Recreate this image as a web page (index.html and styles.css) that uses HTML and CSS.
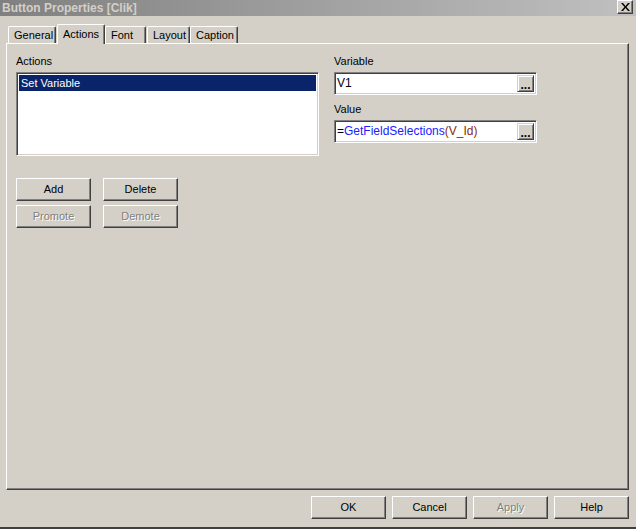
FILE: index.html
```html
<!DOCTYPE html>
<html>
<head>
<meta charset="utf-8">
<link rel="stylesheet" href="styles.css">
</head>
<body>
<div class="window">
  <div class="titlebar">
    <span class="title">Button Properties [Clik]</span>
    <span class="close"><svg width="9" height="8" viewBox="0 0 9 8"><path d="M0 0h2l2.5 3 2.5-3h2L5.5 4 9 8H7L4.5 5 2 8H0l3.5-4z" fill="#000"/></svg></span>
  </div>
  <div class="tabs">
    <div class="tab t-general">General</div>
    <div class="tab active t-actions">Actions</div>
    <div class="tab t-font">Font</div>
    <div class="tab t-layout">Layout</div>
    <div class="tab t-caption">Caption</div>
  </div>
  <div class="panel">
    <div class="cols">
      <div class="left">
        <div class="label">Actions</div>
        <div class="listbox">
          <div class="item selected">Set Variable</div>
        </div>
        <div class="btnrow first">
          <div class="btn">Add</div>
          <div class="btn">Delete</div>
        </div>
        <div class="btnrow">
          <div class="btn disabled">Promote</div>
          <div class="btn disabled">Demote</div>
        </div>
      </div>
      <div class="right">
        <div class="label">Variable</div>
        <div class="field"><span class="val">V1</span><span class="dots">...</span></div>
        <div class="label second">Value</div>
        <div class="field"><span class="val"><span class="op">=</span><span class="fn">GetFieldSelections</span><span class="arg">(V_Id)</span></span><span class="dots">...</span></div>
      </div>
    </div>
  </div>
  <div class="footer">
    <div class="btn">OK</div>
    <div class="btn">Cancel</div>
    <div class="btn disabled">Apply</div>
    <div class="btn">Help</div>
  </div>
  <div class="bottomline"></div>
</div>
</body>
</html>
```
FILE: styles.css
```css
html, body {
  margin: 0;
  padding: 0;
  background: #d4d0c8;
}
.window {
  width: 636px;
  height: 529px;
  display: flex;
  flex-direction: column;
  font-family: "Liberation Sans", Arial, sans-serif;
  font-size: 11px;
  color: #000;
  background: #d4d0c8;
  overflow: hidden;
}
.titlebar {
  height: 16px;
  flex: none;
  background: linear-gradient(to right, #808080, #c0c0c0);
  display: flex;
  align-items: center;
  justify-content: space-between;
  padding: 0 3px 0 2px;
}
.title {
  font-weight: bold;
  font-size: 12px;
  color: #d4d0c8;
  line-height: 14px;
}
.close {
  width: 14px;
  height: 12px;
  background: #d4d0c8;
  border-top: 1px solid #fff;
  border-left: 1px solid #fff;
  border-right: 1px solid #404040;
  border-bottom: 1px solid #404040;
  box-shadow: inset -1px -1px #808080;
  display: flex;
  align-items: center;
  justify-content: center;
  margin-top: -2px;
}
.tabs {
  display: flex;
  align-items: flex-end;
  height: 28px;
  flex: none;
  padding-left: 8px;
  position: relative;
  z-index: 1;
}
.tab {
  box-sizing: border-box;
  height: 17px;
  line-height: 16px;
  padding-left: 5px;
  border-top: 1px solid #fff;
  border-left: 1px solid #fff;
  border-right: 1px solid #404040;
  box-shadow: inset -1px 0 #808080;
  border-radius: 2px 2px 0 0;
  margin-bottom: 1px;
}
.tab.active {
  height: 20px;
  line-height: 18px;
  margin-bottom: 0;
  background: #d4d0c8;
  position: relative;
  z-index: 2;
}
.t-general { width: 48px; }
.t-actions { width: 48px; margin-left: 1px; }
.t-font { width: 41px; }
.t-layout { width: 43px; margin-left: 1px; }
.t-caption { width: 48px; }
.panel {
  flex: none;
  margin: -1px 7px 0 6px;
  height: 447px;
  border-top: 1px solid #fff;
  border-left: 1px solid #fff;
  border-right: 1px solid #404040;
  border-bottom: 1px solid #404040;
  box-shadow: inset -1px -1px #808080;
  box-sizing: border-box;
  padding: 11px 9px 0 9px;
}
.cols {
  display: flex;
}
.left {
  width: 303px;
}
.right {
  margin-left: 15px;
  width: 203px;
}
.label {
  height: 17px;
  line-height: 12px;
}
.label.second {
  margin-top: 8px;
}
.listbox {
  height: 84px;
  background: #fff;
  border-top: 1px solid #808080;
  border-left: 1px solid #808080;
  border-right: 1px solid #fff;
  border-bottom: 1px solid #fff;
  box-shadow: inset 1px 1px #404040, inset -1px -1px #d4d0c8;
  box-sizing: border-box;
  padding: 2px 2px;
}
.item {
  height: 16px;
  line-height: 16px;
  padding-left: 2px;
}
.item.selected {
  background: #0a246a;
  color: #fff;
}
.btnrow {
  display: flex;
  gap: 12px;
  margin-top: 4px;
}
.btnrow.first {
  margin-top: 22px;
}
.btn {
  width: 75px;
  height: 23px;
  box-sizing: border-box;
  border-top: 1px solid #fff;
  border-left: 1px solid #fff;
  border-right: 1px solid #404040;
  border-bottom: 1px solid #404040;
  box-shadow: inset -1px -1px #808080;
  display: flex;
  align-items: center;
  justify-content: center;
  padding-bottom: 1px;
}
.btn.disabled {
  color: #808080;
  text-shadow: 1px 1px #fff;
}
.field {
  height: 23px;
  box-sizing: border-box;
  background: #fff;
  border-top: 1px solid #808080;
  border-left: 1px solid #808080;
  border-right: 1px solid #fff;
  border-bottom: 1px solid #fff;
  box-shadow: inset 1px 1px #404040, inset -1px -1px #d4d0c8;
  display: flex;
  align-items: stretch;
  justify-content: space-between;
  padding: 2px;
}
.val {
  line-height: 17px;
  font-size: 12px;
}
.fn {
  color: #2020ff;
}
.arg {
  color: #8a2a10;
}
.dots {
  width: 17px;
  box-sizing: border-box;
  background: #d4d0c8;
  border-top: 1px solid #d4d0c8;
  border-left: 1px solid #d4d0c8;
  border-right: 1px solid #404040;
  border-bottom: 1px solid #404040;
  box-shadow: inset 1px 1px #fff, inset -1px -1px #808080;
  font-weight: bold;
  font-size: 12px;
  line-height: 18px;
  text-align: center;
}
.footer {
  flex: none;
  display: flex;
  justify-content: flex-end;
  gap: 6px;
  padding: 6px 7px 0 0;
  height: 29px;
}
.bottomline {
  margin-top: auto;
  height: 2px;
  background: #404040;
}
```
